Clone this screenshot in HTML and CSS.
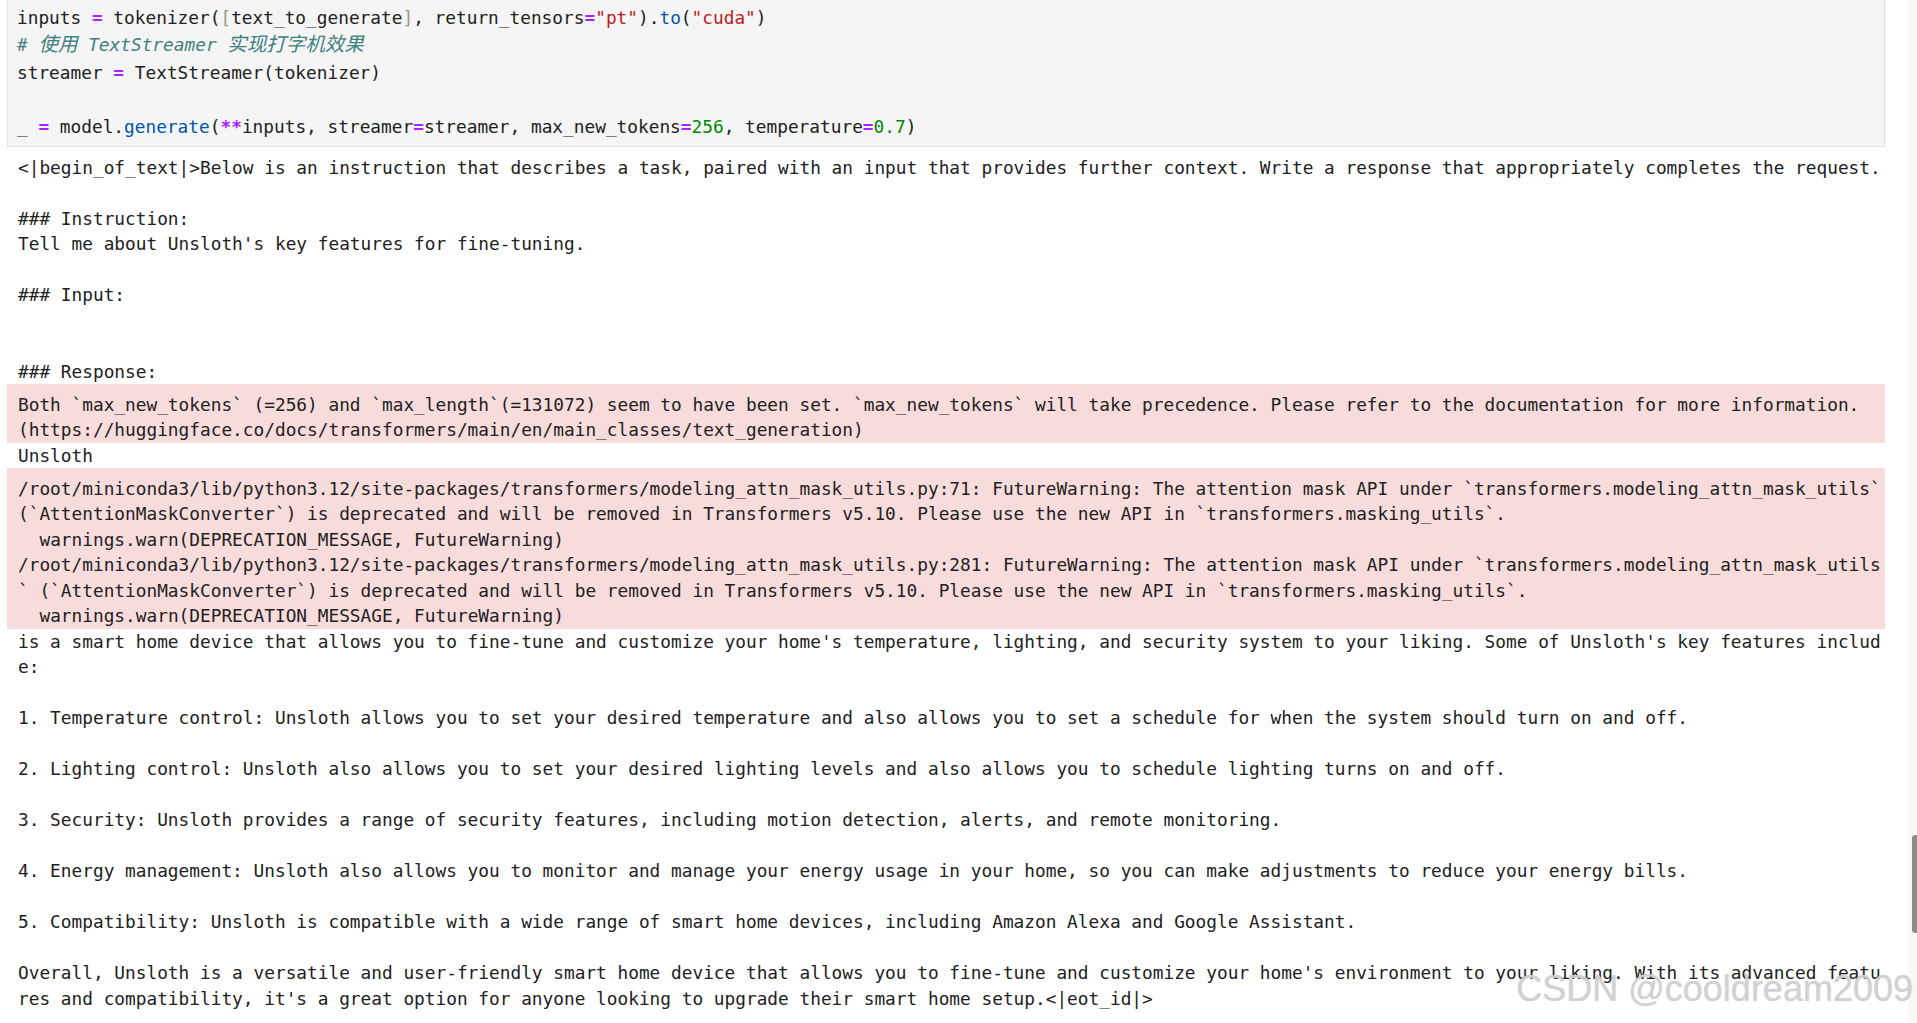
FILE: index.html
```html
<!DOCTYPE html>
<html lang="en">
<head>
<meta charset="utf-8">
<title>Notebook output</title>
<link rel="stylesheet" href="styles.css">
</head>
<body>
<div class="layout">
  <main class="notebook">
    <div class="cell-input">
<pre class="code">inputs <span class="op">=</span> tokenizer(<span class="bracket">[</span>text_to_generate<span class="bracket">]</span>, return_tensors<span class="op">=</span><span class="str">"pt"</span>).<span class="prop">to</span>(<span class="str">"cuda"</span>)
<span class="cmt"># <span class="cjk">使用</span> TextStreamer <span class="cjk">实现打字机效果</span></span>
streamer <span class="op">=</span> TextStreamer(tokenizer)

_ <span class="op">=</span> model.<span class="prop">generate</span>(<span class="op">**</span>inputs, streamer<span class="op">=</span>streamer, max_new_tokens<span class="op">=</span><span class="num">256</span>, temperature<span class="op">=</span><span class="num">0.7</span>)</pre>
    </div>
    <div class="outputs">
      <div class="out stdout"><pre>&lt;|begin_of_text|&gt;Below is an instruction that describes a task, paired with an input that provides further context. Write a response that appropriately completes the request.

### Instruction:
Tell me about Unsloth's key features for fine-tuning.

### Input:


### Response:</pre></div>
      <div class="out stderr"><pre>Both `max_new_tokens` (=256) and `max_length`(=131072) seem to have been set. `max_new_tokens` will take precedence. Please refer to the documentation for more information. (https://huggingface.co/docs/transformers/main/en/main_classes/text_generation)</pre></div>
      <div class="out stdout"><pre>Unsloth</pre></div>
      <div class="out stderr"><pre>/root/miniconda3/lib/python3.12/site-packages/transformers/modeling_attn_mask_utils.py:71: FutureWarning: The attention mask API under `transformers.modeling_attn_mask_utils` (`AttentionMaskConverter`) is deprecated and will be removed in Transformers v5.10. Please use the new API in `transformers.masking_utils`.
  warnings.warn(DEPRECATION_MESSAGE, FutureWarning)
/root/miniconda3/lib/python3.12/site-packages/transformers/modeling_attn_mask_utils.py:281: FutureWarning: The attention mask API under `transformers.modeling_attn_mask_utils` (`AttentionMaskConverter`) is deprecated and will be removed in Transformers v5.10. Please use the new API in `transformers.masking_utils`.
  warnings.warn(DEPRECATION_MESSAGE, FutureWarning)</pre></div>
      <div class="out stdout"><pre>is a smart home device that allows you to fine-tune and customize your home's temperature, lighting, and security system to your liking. Some of Unsloth's key features include:

1. Temperature control: Unsloth allows you to set your desired temperature and also allows you to set a schedule for when the system should turn on and off.

2. Lighting control: Unsloth also allows you to set your desired lighting levels and also allows you to schedule lighting turns on and off.

3. Security: Unsloth provides a range of security features, including motion detection, alerts, and remote monitoring.

4. Energy management: Unsloth also allows you to monitor and manage your energy usage in your home, so you can make adjustments to reduce your energy bills.

5. Compatibility: Unsloth is compatible with a wide range of smart home devices, including Amazon Alexa and Google Assistant.

Overall, Unsloth is a versatile and user-friendly smart home device that allows you to fine-tune and customize your home's environment to your liking. With its advanced features and compatibility, it's a great option for anyone looking to upgrade their smart home setup.&lt;|eot_id|&gt;</pre></div>
    </div>
  </main>
  <div class="scrollbar"><div class="thumb"></div></div>
</div>
<div class="watermark">CSDN @cooldream2009</div>
</body>
</html>
```

FILE: styles.css
```css
html, body {
  margin: 0;
  padding: 0;
  background: #ffffff;
}

body {
  position: relative;
  height: 1023px;
  overflow: hidden;
  font-family: "DejaVu Sans Mono", "Liberation Mono", "Noto Sans CJK SC", monospace;
  font-size: 17.8px;
  color: #212121;
}

.layout {
  display: flex;
  height: 100%;
}

.notebook {
  flex: 1;
  min-width: 0;
  padding: 0 23px 0 7px;
}

.cell-input {
  margin-top: -3px;
  background: #f5f5f5;
  border: 1px solid #e0e0e0;
  padding: 6px 9px 6px 9px;
}

.code {
  margin: 0;
  font: inherit;
  line-height: 27.25px;
  white-space: pre;
  color: #212121;
}

.op {
  color: #aa22ff;
  font-weight: bold;
}

.str {
  color: #ba2121;
}

.prop {
  color: #0055aa;
}

.num {
  color: #008800;
}

.cmt {
  color: #408080;
  font-style: italic;
}

.cjk {
  font-family: "Noto Sans CJK SC", sans-serif;
  font-size: 19.5px;
  line-height: 1;
}

.bracket {
  color: #9a9a80;
}

.outputs {
  padding-top: 7.5px;
}

.out {
  padding-left: 11px;
}

.out pre {
  margin: 0;
  width: 174.2ch;
  font: inherit;
  line-height: 25.5px;
  white-space: pre-wrap;
  word-break: break-all;
  color: #212121;
}

.stderr {
  background: #f8dcdc;
  padding-top: 7.5px;
}

.scrollbar {
  width: 9px;
  flex: none;
  background: #f8f8f8;
  display: flex;
  flex-direction: column;
  align-items: flex-end;
  padding-top: 835px;
  box-sizing: border-box;
}

.thumb {
  width: 5px;
  height: 98px;
  background: #8c8c8c;
  border-radius: 3px 0 0 3px;
}

.watermark {
  position: absolute;
  right: 4px;
  top: 971px;
  font-family: "Liberation Sans", Arial, sans-serif;
  font-size: 36px;
  line-height: 36px;
  color: rgba(210, 210, 210, 0.9);
  text-shadow: 0 0 1px rgba(160, 160, 160, 0.5);
  white-space: nowrap;
}
```
